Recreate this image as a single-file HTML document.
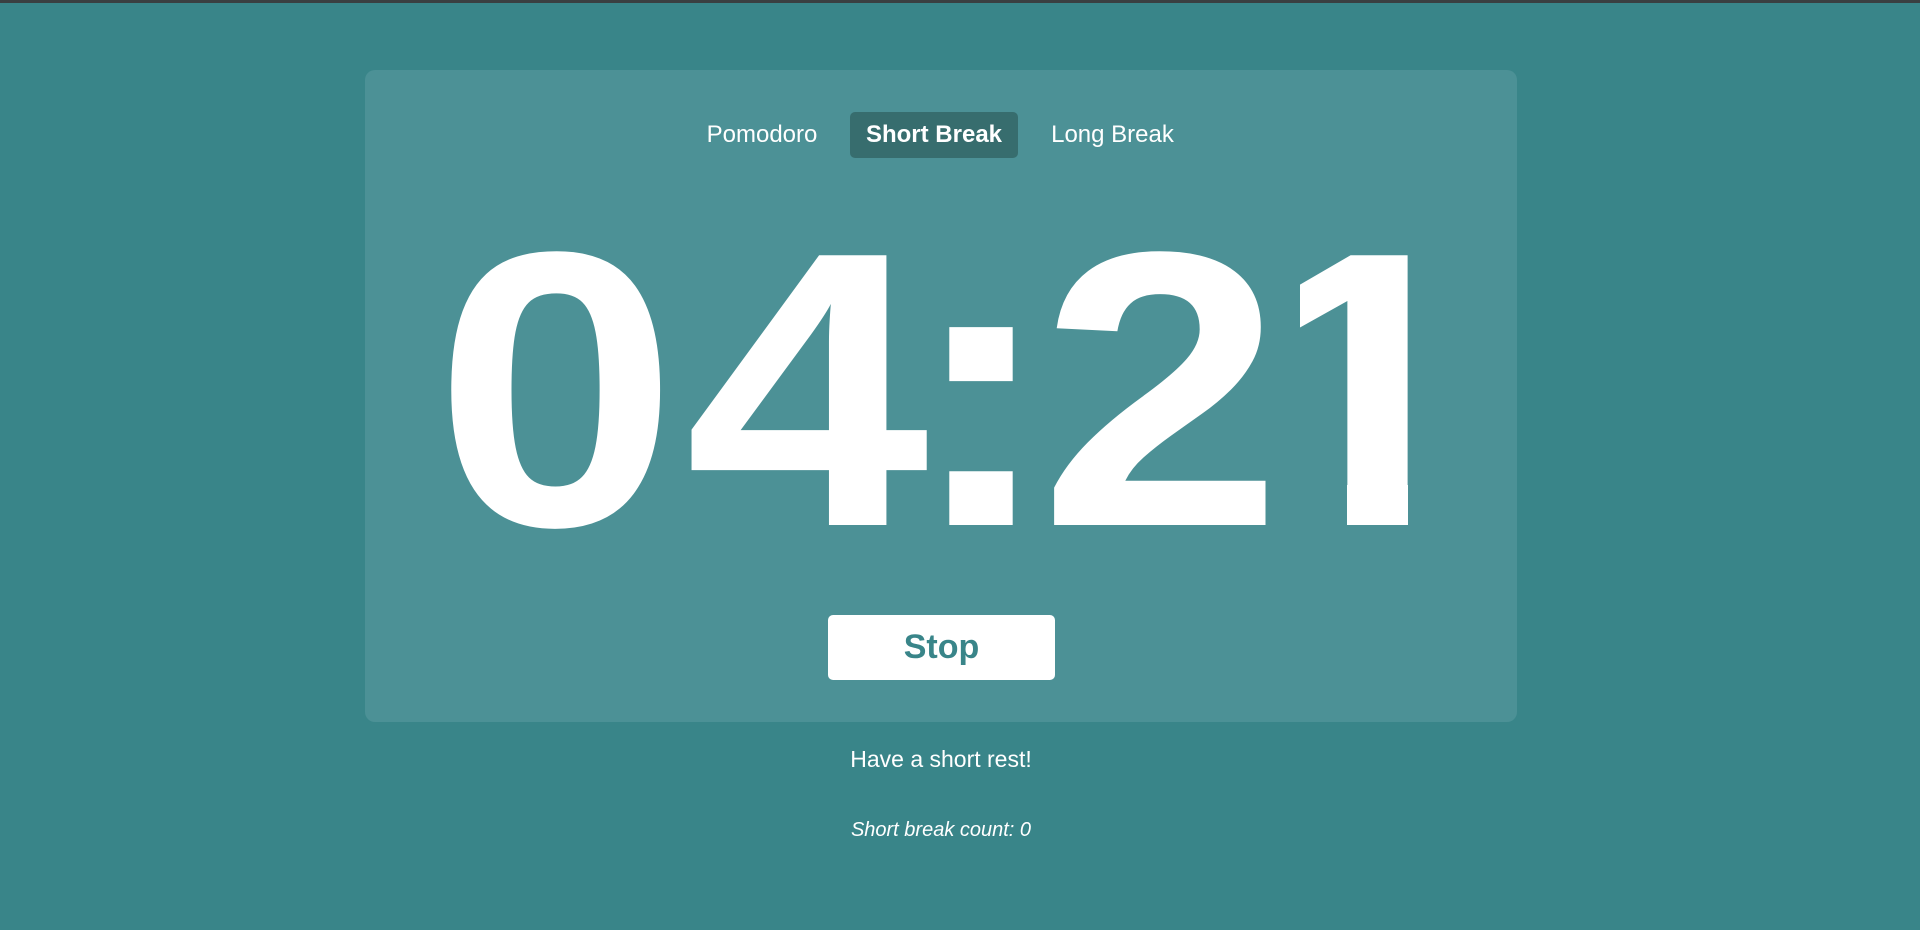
<!DOCTYPE html>
<html><head><style>
html,body{margin:0;padding:0;}
body{width:1920px;height:930px;background:#398589;position:relative;overflow:hidden;font-family:"Liberation Sans",sans-serif;color:#fff;}
.topbar{position:absolute;left:0;top:0;width:1920px;height:3px;background:#3a3f41;}
.card{position:absolute;left:365px;top:70px;width:1152px;height:652px;background:#4c9196;border-radius:10px;}
.tab{position:absolute;top:112px;height:46px;line-height:46px;font-size:24px;text-align:center;}
.active{background:#376d6e;border-radius:5px;font-weight:bold;}
.ch{position:absolute;top:170px;width:300px;margin-left:-150px;text-align:center;font-size:392px;font-weight:bold;line-height:440px;transform:scaleX(1.12);}
.clip{position:absolute;left:1300px;top:0;width:108px;height:930px;overflow:hidden;}
.cover{position:absolute;left:1298px;top:482px;width:49px;height:50px;background:#4c9196;}
.btn{position:absolute;left:828px;top:615px;width:227px;height:65px;background:#fff;border-radius:5px;color:#398589;font-weight:bold;font-size:34px;text-align:center;line-height:65px;}
.msg{position:absolute;left:365px;width:1152px;text-align:center;}
</style></head><body>
<div class="topbar"></div>
<div class="card"></div>
<div class="tab" style="left:697px;width:130px;">Pomodoro</div>
<div class="tab active" style="left:850px;width:168px;">Short Break</div>
<div class="tab" style="left:1040px;width:145px;">Long Break</div>
<div class="ch" style="left:556px">0</div>
<div class="ch" style="left:807px">4</div>
<div class="ch" style="left:981px;transform:scaleX(1.15)">:</div>
<div class="ch" style="left:1161px">2</div>
<div class="clip"><div class="ch" style="left:67px">1</div></div>
<div class="cover"></div>
<div class="btn">Stop</div>
<div class="msg" style="top:746px;font-size:23px;">Have a short rest!</div>
<div class="msg" style="top:819px;font-size:20px;font-style:italic;">Short break count: 0</div>
</body></html>
